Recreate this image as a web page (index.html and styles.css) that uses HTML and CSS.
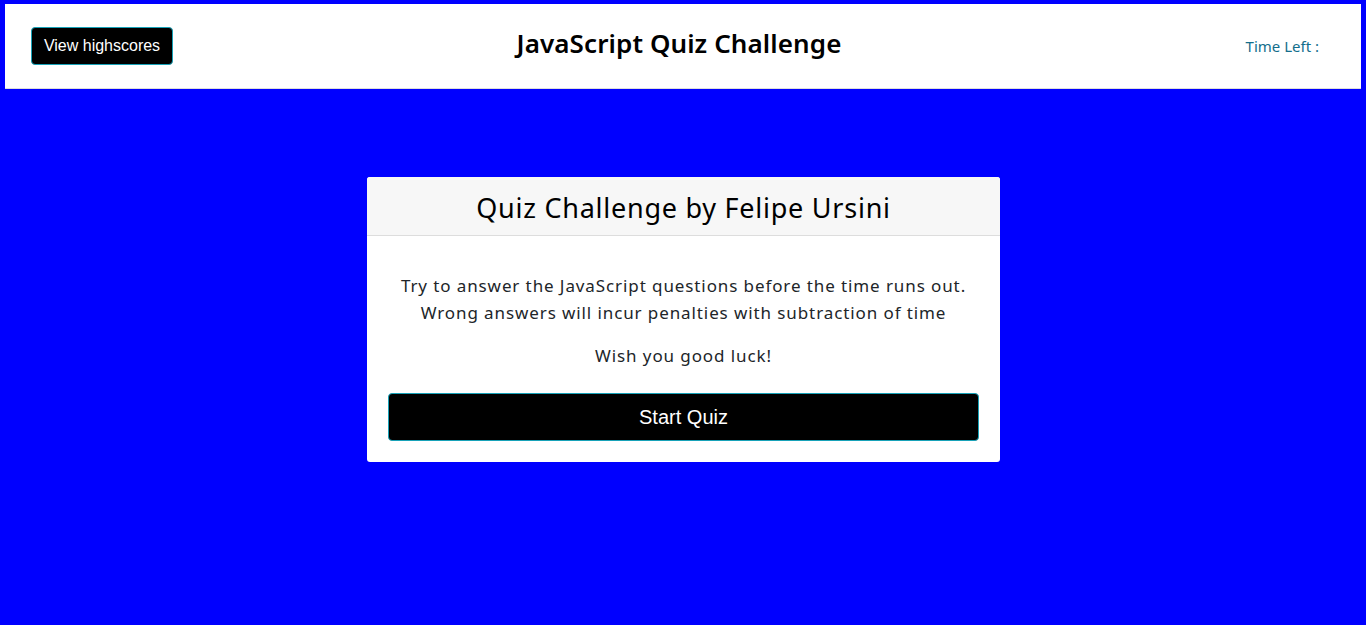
FILE: index.html
```html
<!DOCTYPE html>
<html lang="en">
<head>
<meta charset="utf-8">
<title>JavaScript Quiz Challenge</title>
<link rel="stylesheet" href="styles.css">
</head>
<body>
<div class="page">
  <header class="topbar">
    <div class="topbar-left"><button class="btn btn-small">View highscores</button></div>
    <h1 class="topbar-title">JavaScript Quiz Challenge</h1>
    <div class="topbar-right"><span class="timer">Time Left : </span></div>
  </header>
  <main class="content">
    <section class="card">
      <div class="card-header"><h2 class="card-title">Quiz Challenge by Felipe Ursini</h2></div>
      <div class="card-body">
        <p class="card-text">Try to answer the JavaScript questions before the time runs out.<br>Wrong answers will incur penalties with subtraction of time</p>
        <p class="card-text luck">Wish you good luck!</p>
        <button class="btn btn-block">Start Quiz</button>
      </div>
    </section>
  </main>
</div>
</body>
</html>
```

FILE: styles.css
```css
html, body {
  margin: 0;
  padding: 0;
  height: 100%;
}
body {
  background: #0000ff;
  font-family: "Noto Sans", "Open Sans", sans-serif;
  color: #212529;
  overflow: hidden;
}
.page {
  padding: 4px 5px 0 5px;
  height: 100%;
  box-sizing: border-box;
}
.topbar {
  background: #ffffff;
  height: 85px;
  box-sizing: border-box;
  border-bottom: 1px solid #dddddd;
  display: grid;
  grid-template-columns: 1fr auto 1fr;
  align-items: center;
}
.topbar-left {
  padding-left: 26px;
  padding-bottom: 1px;
}
.topbar-title {
  margin: 0;
  font-size: 26px;
  font-weight: 600;
  color: #000;
  padding-right: 8px;
  padding-bottom: 6px;
  letter-spacing: 0.1px;
}
.topbar-right {
  text-align: right;
  padding-right: 42px;
  padding-bottom: 1px;
}
.timer {
  color: #136e8c;
  font-size: 15px;
}
.btn {
  background: #000;
  color: #fff;
  border: 1px solid #17a2b8;
  border-radius: 4px;
  font-family: "Liberation Sans", Arial, sans-serif;
  cursor: pointer;
  white-space: nowrap;
}
.btn-small {
  height: 38px;
  padding: 0 6px;
  font-size: 16px;
  width: 142px;
}
.content {
  display: flex;
  justify-content: center;
  padding-top: 88px;
}
.card {
  width: 633px;
  background: #fff;
  border-radius: 3px;
  overflow: hidden;
  margin-left: 1px;
}
.card-header {
  background: #f7f7f7;
  height: 59px;
  box-sizing: border-box;
  border-bottom: 1px solid #dddddd;
  display: flex;
  align-items: center;
  justify-content: center;
}
.card-title {
  margin: 0;
  font-size: 27px;
  font-weight: 400;
  color: #000;
  letter-spacing: 0.75px;
  padding-top: 2px;
}
.card-body {
  padding: 36px 21px 21px;
  text-align: center;
}
.card-text {
  margin: 0 0 16px;
  font-size: 17px;
  line-height: 27px;
  letter-spacing: 0.9px;
}
.luck {
  margin-bottom: 24px;
}
.btn-block {
  display: block;
  width: 100%;
  height: 48px;
  font-size: 20px;
}
```
